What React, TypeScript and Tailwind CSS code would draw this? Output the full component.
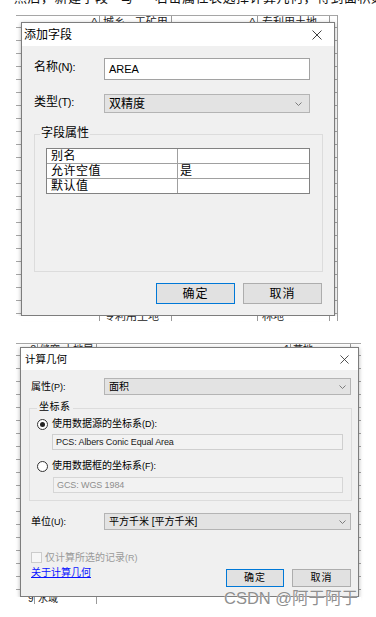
import React from "react";

const XIcon = ({ s }: { s: number }) => (
  <svg width={s} height={s} viewBox="0 0 10 10" fill="none" stroke="#2a2a2a" strokeWidth="0.9">
    <path d="M0.5 0.5 L9.5 9.5 M9.5 0.5 L0.5 9.5" />
  </svg>
);

const Chevron = () => (
  <svg width="7" height="4" viewBox="0 0 7 4" fill="none" stroke="#707070" strokeWidth="0.9">
    <path d="M0.5 0.5 L3.5 3.5 L6.5 0.5" />
  </svg>
);

const gridBg =
  "bg-white bg-[image:repeating-linear-gradient(to_bottom,#ffffff_0px,#ffffff_12px,#a6a6a6_12px,#a6a6a6_13px)]";

function DialogAdd() {
  return (
    <div className="w-[314px] h-[294px] border border-[#7d7d7d] bg-[#f0f0f0] shadow-[0_1px_4px_rgba(0,0,0,0.3)] flex flex-col">
      <div className="h-[23px] shrink-0 bg-white flex items-center justify-between pl-[2px] pr-[12px]">
        <span className="text-[12px] leading-[14px]">添加字段</span>
        <XIcon s={10} />
      </div>
      <div className="px-[12px] pt-[12px] flex flex-col">
        <div className="flex items-start h-[22px]">
          <div className="w-[70px] pt-[2px] text-[12px] leading-[14px] whitespace-nowrap">
            名称<span className="text-[11px] tracking-[-0.3px]">(N):</span>
          </div>
          <div className="w-[206px] h-[22px] bg-white border border-[#a2a2a2] flex items-center pl-[4px] text-[11px] font-medium">
            AREA
          </div>
        </div>
        <div className="flex items-start h-[19px] mt-[14px]">
          <div className="w-[70px] pt-[1px] text-[12px] leading-[14px] whitespace-nowrap">
            类型<span className="text-[11px] tracking-[-0.3px]">(T):</span>
          </div>
          <div className="w-[206px] h-[19px] bg-[#e3e3e3] border border-[#b4b4b4] flex items-center justify-between pl-[4px] pr-[7px] text-[12px] leading-[14px]">
            <span>双精度</span>
            <Chevron />
          </div>
        </div>
        <div className="relative mt-[21px] w-[289px] h-[138px] border border-[#dcdcdc]">
          <span className="absolute left-[5px] top-[-9px] px-[1px] bg-[#f0f0f0] text-[12px] leading-[14px]">
            字段属性
          </span>
          <div className="ml-[11px] mt-[13px] w-[264px] border border-[#828282] bg-white text-[12px] leading-[14px] tracking-[0.5px]">
            <div className="flex h-[15px] border-b border-[#a0a0a0]">
              <div className="w-[131px] border-r border-[#a0a0a0] pl-[4px]">别名</div>
              <div className="flex-1 pl-[2px]"></div>
            </div>
            <div className="flex h-[15px] border-b border-[#a0a0a0]">
              <div className="w-[131px] border-r border-[#a0a0a0] pl-[4px]">允许空值</div>
              <div className="flex-1 pl-[2px]">是</div>
            </div>
            <div className="flex h-[14px]">
              <div className="w-[131px] border-r border-[#a0a0a0] pl-[4px]">默认值</div>
              <div className="flex-1 pl-[2px]"></div>
            </div>
          </div>
        </div>
        <div className="flex justify-end gap-[8px] mt-[11px]">
          <div className="w-[79px] h-[21px] bg-[#e1e1e1] border border-[#0078d7] flex items-center justify-center text-[12px] leading-[14px] tracking-[1px]">
            确定
          </div>
          <div className="w-[79px] h-[21px] bg-[#e1e1e1] border border-[#adadad] flex items-center justify-center text-[12px] leading-[14px] tracking-[1px]">
            取消
          </div>
        </div>
      </div>
    </div>
  );
}

function Radio({ checked }: { checked?: boolean }) {
  return (
    <div className="w-[11px] h-[11px] rounded-full border border-[#333333] bg-white flex items-center justify-center shrink-0">
      {checked && <div className="w-[5px] h-[5px] rounded-full bg-[#222222]" />}
    </div>
  );
}

function DialogGeom() {
  return (
    <div className="w-[339px] h-[250px] border border-[#7d7d7d] bg-[#f0f0f0] shadow-[0_1px_4px_rgba(0,0,0,0.3)] flex flex-col">
      <div className="h-[22px] shrink-0 bg-white flex items-center justify-between pl-[4px] pr-[9px]">
        <span className="text-[10.5px] leading-[12px]">计算几何</span>
        <XIcon s={9} />
      </div>
      <div className="pl-[10px] pr-[7px] pt-[8px] flex flex-col text-[10px] leading-[12px]">
        <div className="flex items-center h-[17px]">
          <div className="w-[73px] whitespace-nowrap">
            属性<span className="text-[9px]">(P):</span>
          </div>
          <div className="w-[247px] h-[17px] bg-[#e3e3e3] border border-[#b4b4b4] flex items-center justify-between pl-[4px] pr-[4px]">
            <span>面积</span>
            <Chevron />
          </div>
        </div>
        <div className="relative mt-[13px] ml-[-2px] w-[323px] h-[93px] border border-[#dcdcdc] pl-[7px] flex flex-col">
          <span className="absolute left-[7px] top-[-8px] px-[2px] bg-[#f0f0f0] text-[10px] leading-[12px] tracking-[0.5px]">
            坐标系
          </span>
          <div className="flex items-center gap-[4px] h-[12px] mt-[9px]">
            <Radio checked />
            <span className="whitespace-nowrap">
              使用数据源的坐标系<span className="text-[9px]">(D):</span>
            </span>
          </div>
          <div className="ml-[15px] mt-[4px] w-[291px] h-[16px] border border-[#cfcfcf] bg-[#f2f2f2] flex items-center pl-[3px] text-[9px] text-[#1a1a1a] tracking-[-0.1px] font-medium">
            PCS: Albers Conic Equal Area
          </div>
          <div className="flex items-center gap-[4px] h-[12px] mt-[10px]">
            <Radio />
            <span className="whitespace-nowrap">
              使用数据框的坐标系<span className="text-[9px]">(F):</span>
            </span>
          </div>
          <div className="ml-[16px] mt-[5px] w-[290px] h-[16px] border border-[#d6d6d6] bg-[#f2f2f2] flex items-center pl-[3px] text-[9px] text-[#8e8e8e] tracking-[-0.1px] font-medium">
            GCS: WGS 1984
          </div>
        </div>
        <div className="flex items-center h-[17px] mt-[12px]">
          <div className="w-[73px] whitespace-nowrap">
            单位<span className="text-[9px]">(U):</span>
          </div>
          <div className="w-[247px] h-[17px] bg-[#e3e3e3] border border-[#b4b4b4] flex items-center justify-between pl-[4px] pr-[4px]">
            <span className="whitespace-nowrap">平方千米 [平方千米]</span>
            <Chevron />
          </div>
        </div>
        <div className="flex items-center gap-[3px] h-[11px] mt-[22px]">
          <div className="w-[11px] h-[11px] border border-[#cccccc] bg-[#f7f7f7] shrink-0" />
          <span className="text-[#9a9a9a] whitespace-nowrap">
            仅计算所选的记录<span className="text-[9px]">(R)</span>
          </span>
        </div>
        <div className="flex items-start justify-between mt-[6px]">
          <span className="mt-[-2px] text-[#0a14ff] underline underline-offset-[1px] whitespace-nowrap">
            关于计算几何
          </span>
          <div className="flex gap-[8px]">
            <div className="w-[58px] h-[18px] bg-[#e1e1e1] border border-[#0078d7] flex items-center justify-center tracking-[1px]">
              确定
            </div>
            <div className="w-[59px] h-[18px] bg-[#e1e1e1] border border-[#adadad] flex items-center justify-center tracking-[1px]">
              取消
            </div>
          </div>
        </div>
      </div>
    </div>
  );
}

export default function App() {
  return (
    <div className="w-[376px] h-[617px] bg-white overflow-hidden relative font-['Liberation_Sans','Noto_Sans_CJK_SC',sans-serif] text-black">
      {/* cut-off text at very top */}
      <div className="h-[5px] overflow-hidden">
        <div className="mt-[-10px] pl-[14px] text-[13px] leading-[15px] whitespace-nowrap text-[#111] tracking-[0.5px]">
          然后，新建字段 &nbsp; 写 &nbsp;&nbsp;&nbsp; 右击属性表选择计算几何，得到面积数据值，单位
        </div>
      </div>
      <div className="h-[10px]" />

      {/* first screenshot */}
      <div className={`ml-[16px] w-[322px] border-r border-[#a0a0a0] flex flex-col ${gridBg}`}>
        <div className="h-[7px] overflow-hidden border-t border-[#a6a6a6] bg-white flex text-[11px] leading-[12px] text-[#222]">
          <div className="w-[84px] border-r border-[#9a9a9a] text-right pr-[2px]">^</div>
          <div className="w-[72px] border-r border-[#9a9a9a] pl-[3px] whitespace-nowrap">城乡 · 工矿用</div>
          <div className="w-[86px] border-r border-[#9a9a9a] text-right pr-[2px]">^</div>
          <div className="w-[72px] border-r border-[#9a9a9a] pl-[4px] whitespace-nowrap">专利用土地</div>
          <div className="flex-1" />
        </div>
        <div className="pl-[5px]">
          <DialogAdd />
        </div>
        <div className="h-[5px] overflow-hidden bg-white flex text-[11px] leading-[12px] text-[#222]">
          <div className="w-[84px] border-r border-[#9a9a9a]" />
          <div className="w-[72px] border-r border-[#9a9a9a] pl-[4px] whitespace-nowrap">
            <div className="mt-[-6px]">专利用土地</div>
          </div>
          <div className="w-[86px] border-r border-[#9a9a9a]" />
          <div className="w-[72px] border-r border-[#9a9a9a] pl-[4px] whitespace-nowrap">
            <div className="mt-[-6px]">林地</div>
          </div>
          <div className="flex-1" />
        </div>
      </div>

      <div className="h-[22px]" />

      {/* second screenshot */}
      <div className={`relative ml-[16px] w-[345px] flex flex-col ${gridBg}`}>
        <div className="h-[4px] overflow-hidden bg-white border-t border-[#a6a6a6] flex text-[10px] leading-[12px] text-[#222]">
          <div className="w-[12px]" />
          <div className="w-[9px] text-right pr-[1px]">8</div>
          <div className="w-[60px] border-l border-[#9a9a9a] border-r pl-[2px] whitespace-nowrap">缝穿·土地居</div>
          <div className="w-[187px]" />
          <div className="w-[6px] text-right pr-[1px]">1</div>
          <div className="w-[60px] border-l border-[#9a9a9a] pl-[2px] whitespace-nowrap">草地</div>
          <div className="flex-1 border-l border-[#9a9a9a]" />
        </div>
        <div className="pl-[4px]">
          <DialogGeom />
        </div>
        <div className="h-[7px] overflow-hidden bg-white flex text-[10px] leading-[12px] text-[#222]">
          <div className="w-[12px]" />
          <div className="w-[6px]">
            <div className="mt-[-4px]">9</div>
          </div>
          <div className="w-[63px] border-l border-r border-[#9a9a9a] pl-[3px] whitespace-nowrap">
            <div className="mt-[-4px]">水域</div>
          </div>
          <div className="flex-1" />
        </div>
        <div className="absolute left-[208px] top-[247px] text-[16.5px] leading-[16px] text-[#8f8f8f] whitespace-nowrap [text-shadow:0_0_1px_#ffffff]">
          CSDN @阿于阿于
        </div>
      </div>
    </div>
  );
}
